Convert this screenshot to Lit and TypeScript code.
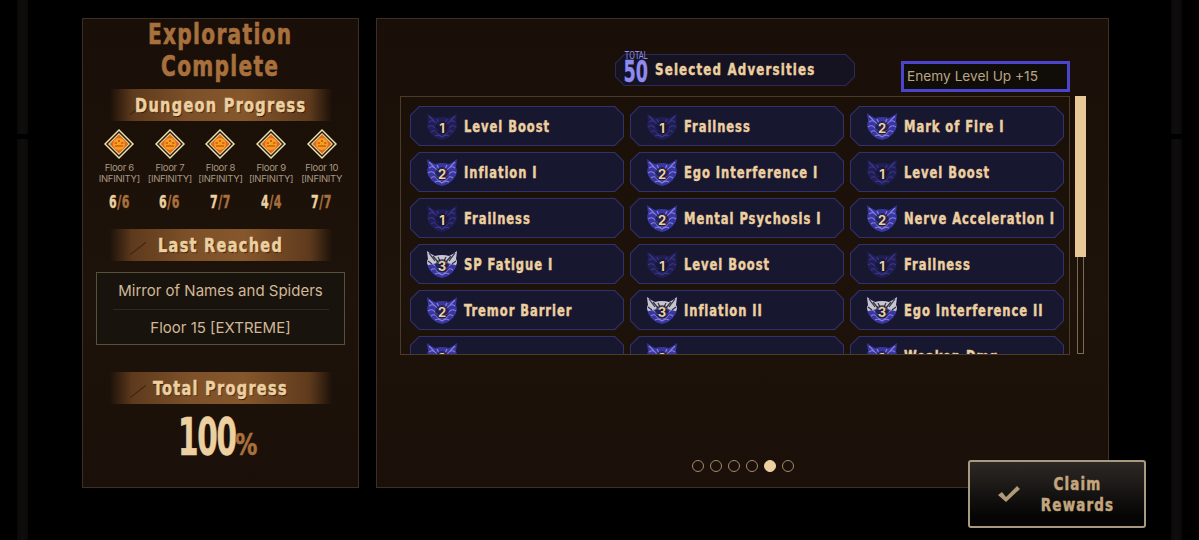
import { LitElement, html, css, svg } from "lit";
import { customElement } from "lit/decorators.js";

const floors = [
  { name: "Floor 6", tag: "INFINITY]", done: 6, total: 6 },
  { name: "Floor 7", tag: "[INFINITY]", done: 6, total: 6 },
  { name: "Floor 8", tag: "[INFINITY]", done: 7, total: 7 },
  { name: "Floor 9", tag: "[INFINITY]", done: 4, total: 4 },
  { name: "Floor 10", tag: "[INFINITY", done: 7, total: 7 },
];

const adversities: [number, string][] = [
  [1, "Level Boost"], [1, "Frailness"], [2, "Mark of Fire I"],
  [2, "Inflation I"], [2, "Ego Interference I"], [1, "Level Boost"],
  [1, "Frailness"], [2, "Mental Psychosis I"], [2, "Nerve Acceleration I"],
  [3, "SP Fatigue I"], [1, "Level Boost"], [1, "Frailness"],
  [2, "Tremor Barrier"], [3, "Inflation II"], [3, "Ego Interference II"],
  [2, ""], [2, ""], [2, "Weaken Dmg"],
];

const MASK = "M2 1 L6 4 L10 6 Q17 4 24 6 L28 4 L32 1 L31 9 Q33 14 30 19 Q26 26 17 28 Q8 26 4 19 Q1 14 3 9 Z";
const MARBLE = "M4 10 Q8 7 11 11 T16 10 M30 10 Q26 7 23 11 T18 10 M3 15 Q7 12 10 16 T13 18 M31 15 Q27 12 24 16 T21 18 M6 20 Q10 17 12 21 Q15 24 17 22 Q19 24 22 21 Q24 17 28 20 M10 24 Q13 22 17 25 Q21 22 24 24";

function tierMask(level: number) {
  const fill = level === 1 ? "#201e52" : "#3a36a0";
  const line = level === 1 ? "#3a368c" : "#8480de";
  return svg`<svg class="mask" viewBox="0 0 34 29" aria-hidden="true">
    <path d=${MASK} fill=${fill} />
    <path d=${MARBLE} fill="none" stroke=${line} stroke-width="1.1" />
    <path d="M4 4 L9 9 M30 4 L25 9 M12 7 L14 11 M22 7 L20 11" fill="none" stroke=${line} stroke-width="1.2" />
    ${level === 3
      ? svg`<path d="M2 1 L6 4 L10 6 Q17 4 24 6 L28 4 L32 1 L31 9 Q33 12 31 15 Q17 11 3 15 Q1 12 3 9 Z" fill="#c6c5d2" />
          <path d="M4 3 L10 11 M8 6 L13 12 M30 3 L24 11 M26 6 L21 12 M3 11 L7 14 M31 11 L27 14 M13 7 L15 11 M21 7 L19 11"
            stroke="#34323f" stroke-width="1.2" fill="none" />`
      : null}
    <ellipse cx="17" cy="16" rx="7" ry="7" fill="#14132c" opacity="0.55" />
  </svg>`;
}

@customElement("app-root")
export class AppRoot extends LitElement {
  static styles = css`
    :host {
      display: block;
      width: 1199px;
      height: 540px;
      background: #000;
      overflow: hidden;
      --display: "DejaVu Sans Condensed", "DejaVu Sans", sans-serif;
      --body: Inter, "Liberation Sans", sans-serif;
      --cream: #ecd0a0;
      --bronze: #a8703c;
    }

    .screen {
      position: relative;
      box-sizing: border-box;
      height: 540px;
      padding: 18px 90px 52px 82px;
      display: flex;
      gap: 17px;
      background:
        linear-gradient(180deg, transparent 134px, #000 134px, #000 139px, transparent 139px),
        linear-gradient(90deg, transparent 17px, #0a0909 17px, #100e0d 22px, #0a0909 28px, transparent 28px,
          transparent 1171px, #0a0909 1171px, #100e0d 1176px, #0a0909 1182px, transparent 1182px);
    }

    .panel {
      box-sizing: border-box;
      border: 1px solid #3d2f22;
      background: linear-gradient(180deg, #190f08 0%, #1e130a 60%, #1b1009 100%);
    }

    .side {
      width: 277px;
      flex-shrink: 0;
      display: flex;
      flex-direction: column;
      align-items: center;
    }

    .title {
      margin: 0;
      height: 70px;
      font: bold 28px/32px var(--display);
      letter-spacing: 1.6px;
      -webkit-text-stroke: 0.6px;
      text-align: center;
      color: var(--bronze);
      transform: scaleX(0.8);
    }

    .banner {
      position: relative;
      width: 222px;
      height: 32px;
      flex-shrink: 0;
      display: flex;
      align-items: center;
      justify-content: center;
      font: bold 19px/1 var(--display);
      letter-spacing: 1.5px;
      -webkit-text-stroke: 0.5px;
      color: var(--cream);
      text-shadow: 1px 1px 1px #2a1508;
      background: linear-gradient(90deg, transparent 0%, #5e3a1c 10%, #7c5029 35%, #86572c 60%, #5e3a1c 90%, transparent 100%);
    }

    .banner::before {
      content: "";
      position: absolute;
      left: 18px;
      top: 19px;
      width: 20px;
      height: 1px;
      background: #3a2210;
      transform: rotate(-38deg);
    }

    .banner span {
      transform: scaleX(0.85);
    }

    .floors {
      width: 253px;
      margin-top: 8px;
      display: grid;
      grid-template-columns: repeat(5, 1fr);
    }

    .floor {
      display: flex;
      flex-direction: column;
      align-items: center;
      min-width: 0;
    }

    .gem {
      width: 30px;
      height: 30px;
      display: block;
      margin-bottom: 3px;
    }

    .floor-name {
      font: 400 9.5px/11px var(--body);
      letter-spacing: -0.3px;
      white-space: nowrap;
      color: #a89880;
    }

    .floor-count {
      margin-top: 8px;
      font: bold 18px/20px var(--display);
      letter-spacing: 0.8px;
      -webkit-text-stroke: 0.4px;
      color: var(--cream);
      transform: scaleX(0.68);
    }

    .floor-count span {
      color: var(--bronze);
    }

    .reached {
      box-sizing: border-box;
      width: 249px;
      height: 73px;
      margin-top: 11px;
      border: 1px solid #57503a;
      background: #19130e;
      display: flex;
      flex-direction: column;
      align-items: center;
      font: 400 15px/36px var(--body);
      color: #d0b896;
    }

    .reached hr {
      width: 216px;
      margin: 0;
      border: 0;
      border-top: 1px solid #2e2820;
    }

    .total {
      margin-top: 27px;
    }

    .percent {
      margin-top: 5px;
      display: flex;
      align-items: baseline;
      font: bold 52px/56px var(--display);
      letter-spacing: -2px;
      -webkit-text-stroke: 0.6px;
      color: var(--cream);
    }

    .percent b {
      margin-right: -34px;
      transform: scaleX(0.63);
      transform-origin: left;
    }

    .percent span {
      font-size: 31px;
      letter-spacing: 0;
      color: var(--bronze);
      transform: scaleX(0.8);
      transform-origin: left;
    }

    .main {
      width: 733px;
      flex-shrink: 0;
      padding: 35px 22px 0 23px;
      display: flex;
      flex-direction: column;
    }

    .top {
      height: 42px;
      display: flex;
      align-items: flex-start;
    }

    .selected {
      position: relative;
      margin-left: 215px;
      width: 240px;
      height: 32px;
      flex-shrink: 0;
    }

    .pill {
      height: 100%;
      display: flex;
      align-items: center;
      box-sizing: border-box;
      padding-left: 40px;
      --edge: #2c2954;
      --fill: #151322;
    }

    .cut {
      position: relative;
      z-index: 0;
      background: var(--edge);
      clip-path: polygon(9px 0, calc(100% - 9px) 0, 100% 9px, 100% calc(100% - 9px), calc(100% - 9px) 100%, 9px 100%, 0 calc(100% - 9px), 0 9px);
    }

    .cut::before {
      content: "";
      position: absolute;
      inset: 1px;
      z-index: -1;
      background: var(--fill);
      clip-path: polygon(8.5px 0, calc(100% - 8.5px) 0, 100% 8.5px, 100% calc(100% - 8.5px), calc(100% - 8.5px) 100%, 8.5px 100%, 0 calc(100% - 8.5px), 0 8.5px);
    }

    .count {
      position: absolute;
      left: 9px;
      top: -2px;
      width: 24px;
      display: flex;
      flex-direction: column;
      align-items: center;
      color: #8f8aef;
      font-family: var(--display);
      font-weight: bold;
    }

    .count small {
      font-size: 10px;
      line-height: 8px;
      font-weight: 400;
      transform: scaleX(0.8);
    }

    .count b {
      font-size: 30px;
      line-height: 24px;
      -webkit-text-stroke: 0.3px;
      transform: scaleX(0.65);
    }

    .selected-label {
      font: bold 16px/1 var(--display);
      letter-spacing: 1.45px;
      -webkit-text-stroke: 0.45px;
      white-space: nowrap;
      color: var(--cream);
      transform: scaleX(0.82);
      transform-origin: left;
    }

    .tip {
      box-sizing: border-box;
      width: 169px;
      height: 31px;
      margin: 7px 0 0 46px;
      padding-left: 3px;
      border: 3px solid #4a45cc;
      background: #100c08;
      font: 400 13.7px/25px var(--body);
      color: #b8a584;
    }

    .list-row {
      display: flex;
      gap: 5px;
      align-items: stretch;
    }

    .list {
      box-sizing: border-box;
      width: 670px;
      height: 259px;
      flex-shrink: 0;
      padding: 9px 6px 0 9px;
      border: 1px solid #4a3c28;
      overflow: hidden;
      display: grid;
      grid-template-columns: repeat(3, 214px);
      grid-auto-rows: 40px;
      column-gap: 6px;
      row-gap: 6px;
    }

    .card {
      display: flex;
      align-items: center;
      box-sizing: border-box;
      padding-left: 15px;
      gap: 5px;
      --edge: #33306a;
      --fill: #181730;
    }

    .badge {
      position: relative;
      width: 34px;
      height: 29px;
      flex-shrink: 0;
    }

    .mask {
      width: 34px;
      height: 29px;
      display: block;
    }

    .badge b {
      position: absolute;
      left: 0;
      right: 0;
      top: 9px;
      text-align: center;
      font: 700 13px/14px var(--body);
      color: var(--cream);
      text-shadow: 0 0 2px #000;
    }

    .name {
      margin-top: 1px;
      font: bold 16px/1 var(--display);
      letter-spacing: 1.2px;
      -webkit-text-stroke: 0.45px;
      white-space: nowrap;
      color: var(--cream);
      transform: scaleX(0.8);
      transform-origin: left;
    }

    .scroll {
      position: relative;
      box-sizing: border-box;
      width: 11px;
      height: 258px;
      padding: 0 2px;
      display: flex;
    }

    .scroll::before {
      content: "";
      flex: 1;
      border: 1px solid #7a6a4e;
    }

    .thumb {
      position: absolute;
      inset: 0 0 97px 0;
      background: #e8c896;
    }

    .dots {
      margin-top: 105px;
      display: flex;
      justify-content: center;
      gap: 6px;
    }

    .dot {
      box-sizing: border-box;
      width: 12px;
      height: 12px;
      border: 1px solid #a08a6a;
      border-radius: 50%;
    }

    .dot.on {
      background: var(--cream);
      border-color: var(--cream);
    }

    .claim {
      position: absolute;
      left: 968px;
      top: 460px;
      box-sizing: border-box;
      width: 178px;
      height: 68px;
      padding: 0 0 0 27px;
      display: flex;
      align-items: center;
      border: 2px solid #a89a80;
      border-radius: 3px;
      background: linear-gradient(180deg, #2c2824 0%, #060505 85%);
    }

    .claim svg {
      width: 24px;
      height: 20px;
      flex-shrink: 0;
    }

    .claim-text {
      flex: 1;
      text-align: center;
      padding-right: 12px;
      font: bold 18px/21px var(--display);
      letter-spacing: 1.4px;
      -webkit-text-stroke: 0.5px;
      color: #c4a67e;
      transform: scaleX(0.83);
    }
  `;

  renderGem() {
    return html`<svg class="gem" viewBox="0 0 30 30" aria-hidden="true">
      <path d="M15 0 L30 15 L15 30 L0 15 Z" fill="#efe3b0" />
      <path d="M15 2 L28 15 L15 28 L2 15 Z" fill="#2a1a0c" />
      <path d="M15 4 L26 15 L15 26 L4 15 Z" fill="#e6d49a" />
      <path d="M15 5.5 L24.5 15 L15 24.5 L5.5 15 Z" fill="#e2661a" />
      <circle cx="15" cy="15" r="6" fill="#f2a020" />
      <path d="M10.5 14 H13 M17 14 H19.5 M11 17 H19 M15 11 V13" stroke="#c8300f" stroke-width="1.2" />
    </svg>`;
  }

  render() {
    return html`
      <div class="screen">
        <section class="panel side">
          <h1 class="title">Exploration<br />Complete</h1>
          <div class="banner"><span>Dungeon Progress</span></div>
          <div class="floors">
            ${floors.map(
              (f) => html`<div class="floor">
                ${this.renderGem()}
                <div class="floor-name">${f.name}</div>
                <div class="floor-name">${f.tag}</div>
                <div class="floor-count">${f.done}<span>/${f.total}</span></div>
              </div>`
            )}
          </div>
          <div class="banner" style="margin-top:17px"><span>Last Reached</span></div>
          <div class="reached">
            <div>Mirror of Names and Spiders</div>
            <hr />
            <div>Floor 15 [EXTREME]</div>
          </div>
          <div class="banner total"><span>Total Progress</span></div>
          <div class="percent"><b>100</b><span>%</span></div>
        </section>

        <section class="panel main">
          <div class="top">
            <div class="selected">
              <div class="pill cut">
                <div class="selected-label">Selected Adversities</div>
              </div>
              <div class="count"><small>TOTAL</small><b>50</b></div>
            </div>
            <div class="tip">Enemy Level Up +15</div>
          </div>
          <div class="list-row">
            <div class="list">
              ${adversities.map(
                ([level, name]) => html`<div class="card cut">
                  <div class="badge">${tierMask(level)}<b>${level}</b></div>
                  <div class="name">${name}</div>
                </div>`
              )}
            </div>
            <div class="scroll"><div class="thumb"></div></div>
          </div>
          <div class="dots">
            ${[0, 1, 2, 3, 4, 5].map((i) => html`<div class="dot ${i === 4 ? "on" : ""}"></div>`)}
          </div>
        </section>

        <button class="claim">
          <svg viewBox="0 0 24 20" aria-hidden="true"><path d="M1 11 L5 8 L9 13 L20 2 L23 5 L9 18 Z" fill="#b09a78" /></svg>
          <span class="claim-text">Claim<br />Rewards</span>
        </button>
      </div>
    `;
  }
}
